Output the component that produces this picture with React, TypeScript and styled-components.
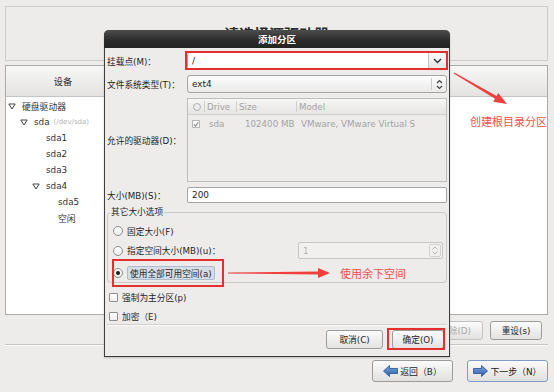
import React from 'react';
import styled, {createGlobalStyle} from 'styled-components';

const FONT = `"DejaVu Sans", "Noto Sans CJK SC", sans-serif`;

const GlobalStyle = createGlobalStyle`
  html, body {
    margin: 0;
    padding: 0;
    background: #edeceb;
  }
  body {
    font-family: ${FONT};
    font-size: 8.7px;
    color: #1e1e1e;
  }
`;

type TreeItem = {
    label: string;
    level: number;
    open?: boolean;
    note?: string;
};

const treeItems: TreeItem[] = [
    {label: '硬盘驱动器', level: 0, open: true},
    {label: 'sda', level: 1, open: true, note: '(/dev/sda)'},
    {label: 'sda1', level: 2},
    {label: 'sda2', level: 2},
    {label: 'sda3', level: 2},
    {label: 'sda4', level: 2, open: true},
    {label: 'sda5', level: 3},
    {label: '空闲', level: 3},
];

export default function App() {
    return (
        <Screen>
            <GlobalStyle/>
            <TopPanel>
                <TopTitle>请选择源驱动器</TopTitle>
            </TopPanel>

            <DevicePanel>
                <ListHeader>
                    <HeaderCell>设备</HeaderCell>
                </ListHeader>
                <TreeBody>
                    {treeItems.map((item) => (
                        <TreeRow
                            key={item.label}
                            $level={item.level}
                        >
                            <Toggle>
                                {item.open && (
                                    <svg
                                        width='8'
                                        height='7'
                                        viewBox='0 0 8 7'
                                    >
                                        <polygon
                                            points='0.8,1 7.2,1 4,6'
                                            fill='#fff'
                                            stroke='#444'
                                            strokeWidth='1'
                                            strokeLinejoin='round'
                                        />
                                    </svg>
                                )}
                            </Toggle>
                            <span>{item.label}</span>
                            {item.note && <TreeNote>{item.note}</TreeNote>}
                        </TreeRow>
                    ))}
                </TreeBody>
            </DevicePanel>

            <ActionRow>
                <Button $w={55}>创建(C)</Button>
                <Button $w={55}>编辑(E)</Button>
                <Button
                    $w={55}
                    $disabled={true}
                >
                    删除(D)
                </Button>
                <Button $w={52}>重设(s)</Button>
            </ActionRow>
            <Separator/>
            <NavRow>
                <NavButton>
                    <BlueArrow dir='left'/>
                    返回（B）
                </NavButton>
                <NavButton $primary={true}>
                    <BlueArrow dir='right'/>
                    下一步（N）
                </NavButton>
            </NavRow>

            <Dialog>
                <TitleBar>添加分区</TitleBar>
                <DialogBody>
                    <FormGrid>
                        <Label>挂载点(M)：</Label>
                        <Combo>
                            <ComboEntry>/</ComboEntry>
                            <ComboButton>
                                <svg
                                    width='9'
                                    height='6'
                                    viewBox='0 0 9 6'
                                >
                                    <polyline
                                        points='1,1 4.5,4.5 8,1'
                                        fill='none'
                                        stroke='#333'
                                        strokeWidth='1.4'
                                    />
                                </svg>
                            </ComboButton>
                        </Combo>

                        <Label>文件系统类型(T)：</Label>
                        <SelectBox>
                            <SelectText>ext4</SelectText>
                            <SelectArrows>
                                <svg
                                    width='7'
                                    height='11'
                                    viewBox='0 0 7 11'
                                >
                                    <polyline
                                        points='1,4 3.5,1.5 6,4'
                                        fill='none'
                                        stroke='#444'
                                        strokeWidth='1.2'
                                    />
                                    <polyline
                                        points='1,7 3.5,9.5 6,7'
                                        fill='none'
                                        stroke='#444'
                                        strokeWidth='1.2'
                                    />
                                </svg>
                            </SelectArrows>
                        </SelectBox>

                        <Label>允许的驱动器(D)：</Label>
                        <DriveList>
                            <DriveHeader>
                                <DriveCol $w={17}>
                                    <HeaderCircle/>
                                </DriveCol>
                                <DriveCol $w={32}>Drive</DriveCol>
                                <DriveCol $w={60}>Size</DriveCol>
                                <DriveCol $last={true}>Model</DriveCol>
                            </DriveHeader>
                            <DriveRow>
                                <DriveCell $w={17}>
                                    <MiniCheck>
                                        <svg
                                            width='7'
                                            height='7'
                                            viewBox='0 0 7 7'
                                        >
                                            <polyline
                                                points='1,3.5 3,5.5 6,1'
                                                fill='none'
                                                stroke='#8a8a8a'
                                                strokeWidth='1.3'
                                            />
                                        </svg>
                                    </MiniCheck>
                                </DriveCell>
                                <DriveCell $w={36}>sda</DriveCell>
                                <DriveCell $w={56}>102400 MB</DriveCell>
                                <DriveCell>VMware, VMware Virtual S</DriveCell>
                            </DriveRow>
                        </DriveList>

                        <Label>大小(MB)(S)：</Label>
                        <Entry>200</Entry>
                    </FormGrid>

                    <SizeFrame>
                        <legend>其它大小选项</legend>
                        <OptionRow $h={16} $mt={5}>
                            <Radio/>
                            <span>固定大小(F)</span>
                        </OptionRow>
                        <OptionRow $h={21} $mt={1}>
                            <Radio/>
                            <span>指定空间大小(MB)(u)：</span>
                            <SpinBox>
                                <span>1</span>
                                <SpinArrows>
                                    <SpinHalf>
                                        <svg
                                            width='6'
                                            height='4'
                                            viewBox='0 0 6 4'
                                        >
                                            <polyline
                                                points='0.5,3.5 3,1 5.5,3.5'
                                                fill='none'
                                                stroke='#b5b5b5'
                                                strokeWidth='1'
                                            />
                                        </svg>
                                    </SpinHalf>
                                    <SpinHalf>
                                        <svg
                                            width='6'
                                            height='4'
                                            viewBox='0 0 6 4'
                                        >
                                            <polyline
                                                points='0.5,0.5 3,3 5.5,0.5'
                                                fill='none'
                                                stroke='#b5b5b5'
                                                strokeWidth='1'
                                            />
                                        </svg>
                                    </SpinHalf>
                                </SpinArrows>
                            </SpinBox>
                        </OptionRow>
                        <OptionRow $h={14} $mt={5}>
                            <Radio $checked={true}/>
                            <Highlight>使用全部可用空间(a)</Highlight>
                        </OptionRow>
                    </SizeFrame>

                    <CheckRow $mt={7}>
                        <CheckBox/>
                        <span>强制为主分区(p)</span>
                    </CheckRow>
                    <CheckRow $mt={5}>
                        <CheckBox/>
                        <span>加密（E)</span>
                    </CheckRow>
                    <DialogSeparator/>
                    <DialogButtons>
                        <Button $w={57}>取消(C)</Button>
                        <Button $w={52}>确定(O)</Button>
                    </DialogButtons>
                </DialogBody>
            </Dialog>

            <Markup
                width='554'
                height='392'
                viewBox='0 0 554 392'
            >
                <rect
                    x='186'
                    y='52'
                    width='261'
                    height='17'
                    fill='none'
                    stroke='#e3302f'
                    strokeWidth='2'
                />
                <rect
                    x='113'
                    y='260'
                    width='110'
                    height='26'
                    fill='none'
                    stroke='#e3302f'
                    strokeWidth='2'
                />
                <rect
                    x='388'
                    y='329'
                    width='56'
                    height='20'
                    fill='none'
                    stroke='#e3302f'
                    strokeWidth='2'
                />
                <polygon
                    points='454.3,72.6 496.6,96.1 498.3,93.1 507,104 493.3,101.7 495,98.7 453.7,73.4'
                    fill='#f0403e'
                />
                <polygon
                    points='228,272.5 318,271.5 318,268 330,273 318,278 318,274.5 228,273.5'
                    fill='#f0403e'
                />
            </Markup>
            <Note $x={470} $y={114}>创建根目录分区</Note>
            <Note $x={340} $y={266}>使用余下空间</Note>
        </Screen>
    );
}

function BlueArrow({dir}: {dir: 'left' | 'right'}) {
    const points = dir === 'left' ?
        '0.5,6 6.5,0.5 6.5,3.5 14.5,3.5 14.5,8.5 6.5,8.5 6.5,11.5' :
        '14.5,6 8.5,0.5 8.5,3.5 0.5,3.5 0.5,8.5 8.5,8.5 8.5,11.5';
    return (
        <svg
            width='15'
            height='12'
            viewBox='0 0 15 12'
        >
            <defs>
                <linearGradient
                    id={`blue-${dir}`}
                    x1='0'
                    y1='0'
                    x2='0'
                    y2='1'
                >
                    <stop offset='0' stopColor='#7ea7e0'/>
                    <stop offset='1' stopColor='#2a5ca6'/>
                </linearGradient>
            </defs>
            <polygon
                points={points}
                fill={`url(#blue-${dir})`}
                stroke='#24508f'
                strokeWidth='0.8'
                strokeLinejoin='round'
            />
        </svg>
    );
}

const Screen = styled.div`
    position: relative;
    width: 554px;
    height: 392px;
    overflow: hidden;
    box-sizing: border-box;
    padding: 6px 6px 0 5px;
    display: flex;
    flex-direction: column;
    background: #edeceb;
`;

const TopPanel = styled.div`
    height: 55px;
    box-sizing: border-box;
    border: 1px solid #cdcdcd;
    display: flex;
    justify-content: center;
`;

const TopTitle = styled.div`
    margin-top: 19px;
    font-size: 15px;
    line-height: 18px;
    font-weight: bold;
    color: #2a2a2a;
`;

const DevicePanel = styled.div`
    margin-top: 4px;
    height: 250px;
    box-sizing: border-box;
    border: 1px solid #ababab;
    background: #fff;
    display: flex;
    flex-direction: column;
`;

const ListHeader = styled.div`
    height: 31px;
    flex: none;
    box-sizing: border-box;
    display: flex;
    border-bottom: 1px solid #c4c4c4;
    background: linear-gradient(#f7f7f6, #e4e3e2);
`;

const HeaderCell = styled.div`
    width: 114px;
    display: flex;
    align-items: center;
    justify-content: center;
    font-size: 9.2px;
    color: #2a2a2a;
`;

const TreeBody = styled.div`
    padding-top: 1px;
    display: flex;
    flex-direction: column;
`;

const TreeRow = styled.div<{$level: number}>`
    height: 16px;
    display: flex;
    align-items: center;
    padding-left: ${(p) => 1 + (p.$level * 12)}px;
    font-size: 8.8px;
    color: #333;
`;

const Toggle = styled.span`
    width: 15px;
    flex: none;
    display: flex;
    align-items: center;
    padding-left: 1px;
    box-sizing: border-box;
`;

const TreeNote = styled.span`
    margin-left: 4px;
    font-size: 7px;
    color: #b4b4b4;
`;

const ActionRow = styled.div`
    margin-top: 6px;
    margin-right: 0;
    height: 18px;
    display: flex;
    justify-content: flex-end;
    gap: 7px;
    padding-right: 6px;
`;

const Button = styled.div<{$w: number; $disabled?: boolean}>`
    width: ${(p) => p.$w}px;
    height: 19px;
    box-sizing: border-box;
    border: 1px solid #9c9c9c;
    border-radius: 3px;
    background: linear-gradient(#fbfbfb, #e3e2e1);
    display: flex;
    align-items: center;
    justify-content: center;
    font-size: 8.7px;
    color: ${(p) => (p.$disabled ? '#a8a8a8' : '#1e1e1e')};
    border-color: ${(p) => (p.$disabled ? '#c2c2c2' : '#9c9c9c')};
`;

const Separator = styled.div`
    margin-top: 5px;
    height: 1px;
    background: #c6c5c4;
    border-bottom: 1px solid #fafafa;
`;

const NavRow = styled.div`
    margin-top: 14px;
    display: flex;
    justify-content: flex-end;
    gap: 14px;
`;

const NavButton = styled.div<{$primary?: boolean}>`
    width: 81px;
    height: 22px;
    box-sizing: border-box;
    border: 1px solid ${(p) => (p.$primary ? '#7e9cc6' : '#9c9c9c')};
    border-radius: 3px;
    background: linear-gradient(#fbfbfb, #e1e0df);
    display: flex;
    align-items: center;
    justify-content: center;
    gap: 2px;
    font-size: 8.9px;
    color: #1e1e1e;
`;

const Dialog = styled.div`
    position: absolute;
    left: 104px;
    top: 30px;
    width: 346px;
    height: 327px;
    box-sizing: border-box;
    border: 1px solid #3e3e3e;
    border-top: none;
    border-radius: 5px 5px 0 0;
    background: #edeceb;
    display: flex;
    flex-direction: column;
    box-shadow: 0 1px 2px rgba(0, 0, 0, 0.2);
`;

const TitleBar = styled.div`
    height: 18px;
    flex: none;
    border-radius: 5px 5px 0 0;
    margin: 0 -1px;
    background: linear-gradient(#4d4d4d, #2a2a2a 60%, #232323);
    color: #fff;
    font-weight: bold;
    font-size: 9.5px;
    display: flex;
    align-items: center;
    justify-content: center;
`;

const DialogBody = styled.div`
    flex: 1;
    padding: 4px 2px 0 2px;
    display: flex;
    flex-direction: column;
`;

const FormGrid = styled.div`
    display: grid;
    grid-template-columns: 80px 1fr;
    grid-template-rows: 18px 18px 84px 16px;
    row-gap: 5px;
`;

const Label = styled.div`
    align-self: center;
    white-space: nowrap;
    font-size: 8.7px;
`;

const Combo = styled.div`
    display: flex;
    box-sizing: border-box;
    border: 1px solid #a9a9a9;
    border-radius: 3px;
    overflow: hidden;
`;

const ComboEntry = styled.div`
    flex: 1;
    background: #fff;
    padding-left: 4px;
    display: flex;
    align-items: center;
    font-size: 9px;
`;

const ComboButton = styled.div`
    width: 17px;
    border-left: 1px solid #c4c4c4;
    background: linear-gradient(#fafafa, #e6e5e4);
    display: flex;
    align-items: center;
    justify-content: center;
`;

const SelectBox = styled.div`
    display: flex;
    box-sizing: border-box;
    border: 1px solid #a5a5a5;
    border-radius: 3px;
    background: linear-gradient(#fdfdfd, #ebeae9);
`;

const SelectText = styled.div`
    flex: 1;
    padding-left: 4px;
    display: flex;
    align-items: center;
    font-size: 8.9px;
`;

const SelectArrows = styled.div`
    width: 14px;
    margin: 2px 0;
    border-left: 1px solid #c8c8c8;
    display: flex;
    align-items: center;
    justify-content: center;
`;

const DriveList = styled.div`
    box-sizing: border-box;
    border: 1px solid #bdbdbd;
    background: #edeceb;
    display: flex;
    flex-direction: column;
    overflow: hidden;
    color: #a3a3a3;
`;

const DriveHeader = styled.div`
    height: 16px;
    flex: none;
    box-sizing: border-box;
    display: flex;
    border-bottom: 1px solid #d0d0d0;
    background: linear-gradient(#f6f6f5, #e6e5e4);
`;

const DriveCol = styled.div<{$w?: number; $last?: boolean}>`
    width: ${(p) => (p.$w ? `${p.$w}px` : 'auto')};
    flex: ${(p) => (p.$last ? 1 : 'none')};
    box-sizing: border-box;
    display: flex;
    align-items: center;
    padding-left: 2px;
    border-right: ${(p) => (p.$last ? 'none' : '1px solid #cfcfcf')};
    margin: 2px 0;
    font-size: 8.7px;
`;

const HeaderCircle = styled.span`
    width: 6px;
    height: 6px;
    margin-left: 3px;
    border: 1px solid #b0b0b0;
    border-radius: 50%;
`;

const DriveRow = styled.div`
    height: 18px;
    display: flex;
    align-items: center;
    white-space: nowrap;
`;

const DriveCell = styled.div<{$w?: number}>`
    width: ${(p) => (p.$w ? `${p.$w}px` : 'auto')};
    flex: none;
    display: flex;
    align-items: center;
    padding-left: 4px;
    box-sizing: border-box;
    font-size: 8.7px;
`;

const MiniCheck = styled.span`
    width: 8px;
    height: 8px;
    box-sizing: border-box;
    border: 1px solid #b8b8b8;
    background: #f8f8f8;
    display: flex;
    align-items: center;
    justify-content: center;
`;

const Entry = styled.div`
    box-sizing: border-box;
    border: 1px solid #a5a5a5;
    border-radius: 2px;
    background: #fff;
    padding-left: 4px;
    display: flex;
    align-items: center;
    font-size: 8.9px;
`;

const SizeFrame = styled.fieldset`
    margin: 3px 0 0;
    padding: 0 3px 2px 5px;
    border: 1px solid #c9c8c7;
    border-radius: 4px;
    min-width: 0;

    legend {
        margin-left: -3px;
        padding: 0 1px;
        line-height: 12px;
        font-size: 8.7px;
    }
`;

const OptionRow = styled.div<{$h: number; $mt: number}>`
    height: ${(p) => p.$h}px;
    margin-top: ${(p) => p.$mt}px;
    display: flex;
    align-items: center;
    gap: 4px;
    font-size: 8.7px;
`;

const Radio = styled.span<{$checked?: boolean}>`
    width: 10px;
    height: 10px;
    flex: none;
    box-sizing: border-box;
    border: 1px solid #8d8d8d;
    border-radius: 50%;
    background: linear-gradient(#ffffff, #ececec);
    display: flex;
    align-items: center;
    justify-content: center;

    &::after {
        content: '';
        width: 4px;
        height: 4px;
        border-radius: 50%;
        background: #1e1e1e;
        display: ${(p) => (p.$checked ? 'block' : 'none')};
    }
`;

const SpinBox = styled.div`
    margin-left: auto;
    width: 145px;
    height: 17px;
    box-sizing: border-box;
    border: 1px solid #c6c6c6;
    border-radius: 2px;
    background: #f1f0ef;
    display: flex;
    align-items: center;
    padding-left: 4px;
    color: #b2b2b2;

    > span {
        flex: 1;
    }
`;

const SpinArrows = styled.div`
    width: 10px;
    align-self: stretch;
    display: flex;
    flex-direction: column;
    margin: 1px 1px 1px 0;
    border: 1px solid #d0d0d0;
    border-radius: 2px;
`;

const SpinHalf = styled.div`
    flex: 1;
    display: flex;
    align-items: center;
    justify-content: center;
`;

const Highlight = styled.span`
    height: 14px;
    box-sizing: border-box;
    padding: 0 2px;
    border: 1px solid #b0bccb;
    border-radius: 2px;
    background: #d6dde6;
    display: flex;
    align-items: center;
`;

const CheckRow = styled.div<{$mt: number}>`
    height: 14px;
    margin-top: ${(p) => p.$mt}px;
    display: flex;
    align-items: center;
    gap: 4px;
    padding-left: 2px;
    font-size: 8.7px;
`;

const CheckBox = styled.span`
    width: 9px;
    height: 9px;
    flex: none;
    box-sizing: border-box;
    border: 1px solid #8d8d8d;
    border-radius: 1px;
    background: linear-gradient(#ffffff, #eeeeee);
`;

const DialogSeparator = styled.div`
    margin-top: 1px;
    height: 1px;
    background: #cfcecd;
    border-bottom: 1px solid #fbfbfb;
`;

const DialogButtons = styled.div`
    margin-top: 4px;
    padding-right: 3px;
    display: flex;
    justify-content: flex-end;
    gap: 9px;
`;

const Markup = styled.svg`
    position: absolute;
    left: 0;
    top: 0;
    pointer-events: none;
`;

const Note = styled.div<{$x: number; $y: number}>`
    position: absolute;
    left: ${(p) => p.$x}px;
    top: ${(p) => p.$y}px;
    font-family: "Noto Sans CJK SC", sans-serif;
    font-size: 11px;
    line-height: 14px;
    color: #f2504e;
    white-space: nowrap;
`;
